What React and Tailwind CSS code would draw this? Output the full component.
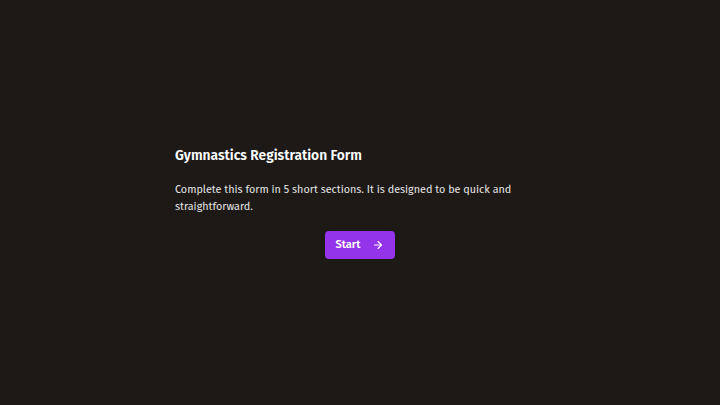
import React from "react";
import { ArrowRight } from "lucide-react";

export default function App() {
    return (
        <div
            className="w-full h-[405px] bg-[#1c1917] flex items-center justify-center text-[#f5f5f4]"
            style={{ fontFamily: "'Fira Sans', 'Noto Sans', sans-serif" }}
        >
            <div className="w-[370px] flex flex-col">
                <h1 className="text-[13.8px] font-semibold leading-5 text-white">
                    Gymnastics Registration Form
                </h1>
                <p className="mt-[15px] text-[10.8px] leading-[17px] text-[#e7e5e4]">
                    Complete this form in 5 short sections. It is designed to be quick and
                    straightforward.
                </p>
                <div className="mt-4 flex justify-center">
                    <button className="w-[70px] h-[28px] rounded bg-[#9333ea] text-white text-[11px] font-semibold flex items-center justify-center gap-3">
                        Start
                        <ArrowRight size={12} strokeWidth={2.25} />
                    </button>
                </div>
            </div>
        </div>
    );
}
